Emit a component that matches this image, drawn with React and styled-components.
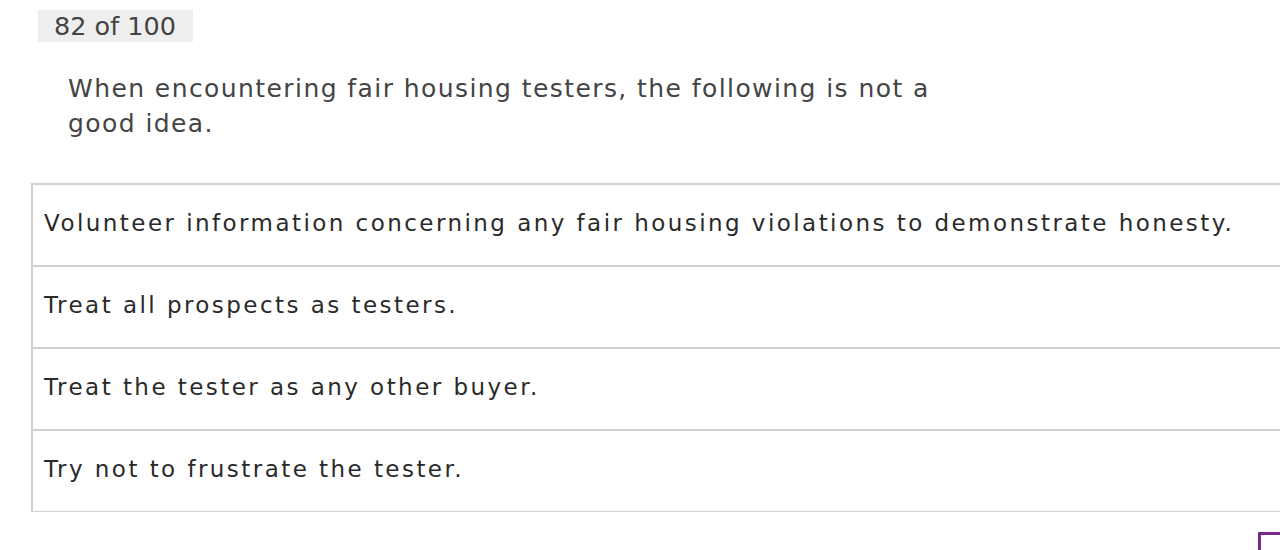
import React from "react";
import styled, { createGlobalStyle } from "styled-components";

const Global = createGlobalStyle`
  html, body { margin: 0; padding: 0; background: #fff; overflow: hidden; }
  body { font-family: "DejaVu Sans", "Open Sans", sans-serif; }
`;

const Page = styled.div`
  width: 1320px;
  height: 550px;
  padding: 10px 0 0 31px;
  box-sizing: border-box;
`;

const Counter = styled.div`
  display: inline-block;
  margin-left: 7px;
  background: #eeeeee;
  color: #444;
  font-size: 25.5px;
  line-height: 32px;
  padding: 0 17px 0 16px;
`;

const Question = styled.p`
  margin: 29px 0 0 37px;
  width: 900px;
  color: #444;
  font-size: 25px;
  line-height: 35px;
  letter-spacing: 1.42px;
`;

const Answers = styled.ul`
  list-style: none;
  margin: 42px 0 0 0;
  padding: 0;
  border: 1px solid #d0d0d0;
  border-top-width: 2px;
  border-left-width: 2px;
  width: 1290px;
`;

const Answer = styled.li`
  height: 75px;
  display: flex;
  align-items: center;
  padding: 0 12px 5px 11px;
  border-top: ${(p) => (p.$first ? "none" : "2px solid #d0d0d0")};
  color: #2a2a2a;
  font-size: 23px;
  font-weight: 400;
  letter-spacing: 2.45px;
`;

const Footer = styled.div`
  display: flex;
  justify-content: flex-end;
  width: 1287px;
  margin-top: 20px;
`;

const NextButton = styled.button`
  width: 60px;
  height: 40px;
  border: 3px solid #7a2a8a;
  background: #fff;
  padding: 0;
`;

const answers = [
  "Volunteer information concerning any fair housing violations to demonstrate honesty.",
  "Treat all prospects as testers.",
  "Treat the tester as any other buyer.",
  "Try not to frustrate the tester.",
];

export default function App() {
  return (
    <>
      <Global />
      <Page>
        <Counter>82 of 100</Counter>
        <Question>
          When encountering fair housing testers, the following is not a good idea.
        </Question>
        <Answers>
          {answers.map((a, i) => (
            <Answer key={i} $first={i === 0}>
              {a}
            </Answer>
          ))}
        </Answers>
        <Footer>
          <NextButton aria-label="next" />
        </Footer>
      </Page>
    </>
  );
}
